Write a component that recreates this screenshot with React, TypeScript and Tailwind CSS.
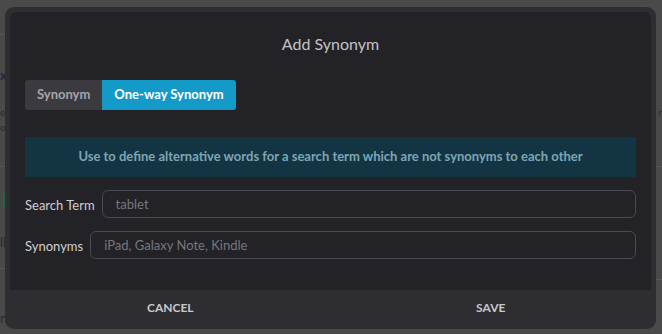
const font = { fontFamily: "Lato, 'Noto Sans', sans-serif" };

function Backdrop() {
  // faint page content showing around the modal
  return (
    <div className="absolute inset-0 text-[13px] text-[#262a30]" style={font}>
      <div className="absolute left-0 top-[34px] h-px w-[8px] bg-[#575757]" />
      <div className="absolute left-0 top-[66px] font-bold text-[#1d2a3a]">x</div>
      <div className="absolute left-0 top-[105px] text-[10px]">e</div>
      <div className="absolute left-0 top-[120px] text-[10px]">o</div>
      <div className="absolute left-0 top-[166px] h-px w-[8px] bg-[#575757]" />
      <div className="absolute left-[3px] top-[193px] h-[14px] w-[2px] bg-[#1f6b3e]" />
      <div className="absolute left-0 top-[233px]">ll</div>
      <div className="absolute left-0 top-[268px] h-px w-[8px] bg-[#575757]" />
      <div className="absolute left-0 top-[309px] text-[#1d2a3a]">n</div>
      <div className="absolute right-0 top-[105px] text-[10px]">r</div>
      <div className="absolute right-0 top-[166px] h-px w-[8px] bg-[#575757]" />
      <div className="absolute right-0 top-[279px] h-px w-[8px] bg-[#575757]" />
    </div>
  );
}

function Field({ label, placeholder }: { label: string; placeholder: string }) {
  return (
    <div className="flex items-center gap-[7px]">
      <label className="whitespace-nowrap pt-[4px] text-[13px] text-[#cfcfd2]">{label}</label>
      <input
        placeholder={placeholder}
        className="h-[28px] flex-1 rounded-[6px] border border-[#4a4a50] bg-transparent px-[13px] text-[13px] text-[#ddd] outline-none placeholder:text-[#77777c]"
        style={font}
      />
    </div>
  );
}

export default function App() {
  return (
    <div className="relative h-[334px] w-[662px] overflow-hidden bg-[#4a4a4a] pl-[5px] pt-[7px]" style={font}>
      <Backdrop />
      <div className="relative flex h-[322px] w-[651px] flex-col rounded-[9px] bg-[#2e2e32] px-[5px] pt-[5px]">
        <div className="flex flex-1 flex-col rounded-t-[6px] bg-[#232227] px-[15px] pt-[20px]">
          <h2 className="text-center text-[16px] leading-[24px] text-[#c2c2c6]">Add Synonym</h2>

          <div className="mt-[24px] flex h-[30px] w-fit overflow-hidden rounded-[3px] text-[13px] font-bold">
            <button className="bg-[#3a3a3f] px-[12px] text-[#a5a5aa]">Synonym</button>
            <button className="bg-[#149ac9] px-[12px] text-white">One-way Synonym</button>
          </div>

          <div className="mt-[27px] flex h-[40px] items-center justify-center bg-[#133543] text-[13px] font-bold text-[#7ea5b4]">
            Use to define alternative words for a search term which are not synonyms to each other
          </div>

          <div className="mt-[13px] flex flex-col gap-[13px]">
            <Field label="Search Term" placeholder="tablet" />
            <Field label="Synonyms" placeholder="iPad, Galaxy Note, Kindle" />
          </div>
        </div>

        <div className="grid h-[39px] grid-cols-2 items-center pb-[3px] text-[12px] font-bold text-[#c9c9cd]">
          <button>CANCEL</button>
          <button>SAVE</button>
        </div>
      </div>
    </div>
  );
}
